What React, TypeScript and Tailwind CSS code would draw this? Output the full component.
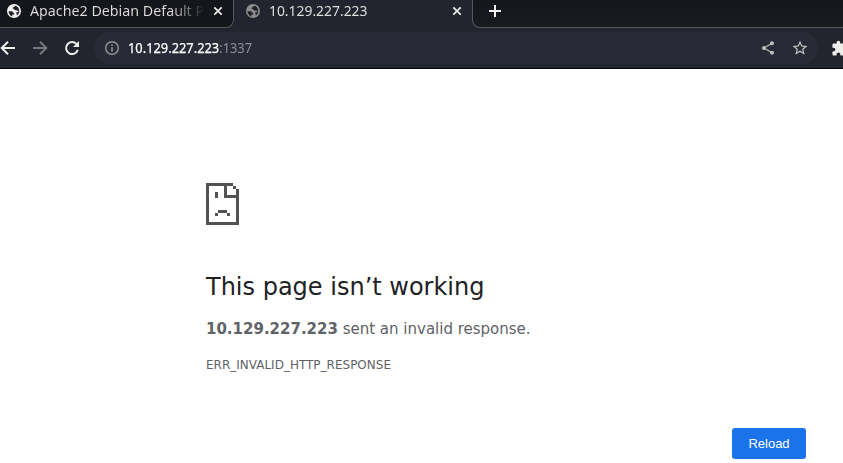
import { MdShare, MdStarOutline, MdExtension } from 'react-icons/md';

const SAD: [number, number, number, number][] = [
  [0, 0, 9, 1], [0, 1, 1, 12], [0, 13, 11, 1], [10, 2, 1, 11],
  [6, 1, 1, 4], [7, 4, 3, 1], [9, 1, 1, 1], [3, 3, 1, 2],
  [4, 9, 3, 1], [3, 10, 1, 1], [7, 10, 1, 1],
];

function Globe({ color }: { color: string }) {
  return (
    <svg className="shrink-0" width="14" height="14" viewBox="0 0 14 14">
      <circle cx="7" cy="7" r="7" fill={color} />
      <path d="M1.6 7.3 L4.6 7.3 C6 7.5 5.8 9 7.2 9 L7.2 10.4 L5.3 10.6 L5.3 12.4 C3.2 12 1.6 9.8 1.6 7.3 Z M8.3 1.7 C7.8 3.2 5.7 2.8 5.6 4.1 C5.5 5 7.1 4.7 7.4 5.6 C7.8 6.8 9.3 6.9 12.3 7.1 C12.2 9 11.4 10.6 10 11.5 L9.5 9.8 L9.1 8.4 L10.9 7.9 L12.3 6.2 C12 4 10.3 2.1 8.3 1.7 Z" fill="#202129" />
    </svg>
  );
}

function Cross() {
  return (
    <svg className="ml-[6px] shrink-0 text-[#eeeeea]" width="14" height="14" viewBox="0 0 14 14" fill="none" stroke="currentColor" strokeWidth="1.7">
      <path d="M3.3 3.3 L10.7 10.7 M10.7 3.3 L3.3 10.7" />
    </svg>
  );
}

function Arrow({ className }: { className: string }) {
  return (
    <svg className={`shrink-0 ${className}`} width="16" height="16" viewBox="0 0 16 16" fill="none" stroke="currentColor" strokeWidth="2">
      <path d="M15 8 H2.5 M8 1.7 L1.7 8 L8 14.3" />
    </svg>
  );
}

export default function App() {
  return (
    <div className="flex h-[463px] w-[843px] flex-col overflow-hidden bg-white font-['Noto_Sans',sans-serif]">
      <header className="h-[69px] shrink-0 border-b border-[#08090d] bg-[#22242e]">
        <div className="flex h-7">
          <div className="flex h-7 w-[234px] items-start rounded-br-lg border-r border-b border-[#56575b] bg-[#15161b] pl-[7px]">
            <div className="flex h-[22px] items-center">
              <Globe color="#f1f1ef" />
              <span className="ml-[9px] w-[175px] pb-[2px]">
                <span className="block w-[184px] origin-left scale-x-[.95] bg-linear-to-r from-[#dededb] from-80% to-transparent bg-clip-text text-[15px] whitespace-nowrap text-transparent">Apache2 Debian Default P</span>
              </span>
              <Cross />
            </div>
          </div>
          <div className="flex h-[22px] w-[238px] items-center pl-3">
            <Globe color="#8c8c8c" />
            <span className="ml-[9px] w-[175px] pb-[2px] text-[15px] text-[#dededb]"><span className="inline-block origin-left scale-x-[.925]">10.129.227.223</span></span>
            <Cross />
          </div>
          <div className="flex h-7 flex-1 items-start rounded-bl-lg border-b border-l border-[#56575b] bg-linear-to-b from-[#15161b] to-[#1a1b20] pl-[16px] text-[#f1f1ef]">
            <svg className="mt-[5px]" width="12" height="12" viewBox="0 0 12 12" fill="none" stroke="currentColor" strokeWidth="2">
              <path d="M6 0 V12 M0 6 H12" />
            </svg>
          </div>
        </div>
        <div className="flex h-10 items-center">
          <div className="flex items-center text-[#eeeeea]">
            <Arrow className="" />
            <Arrow className="ml-4 rotate-180 text-[#77787c]" />
            <svg className="ml-4 shrink-0" width="16" height="16" viewBox="0 0 16 16" fill="none" stroke="currentColor" strokeWidth="2">
              <path d="M13.8 9.8 A6 6 0 1 1 12.6 4.1" />
              <path d="M15 1 V7 H9 Z" fill="currentColor" stroke="none" />
            </svg>
          </div>
          <div className="ml-[14px] flex h-8 w-[724px] shrink-0 items-center rounded-full bg-[#282a35] pl-[11px]">
            <svg className="shrink-0 text-[#94959b]" width="14" height="14" viewBox="0 0 14 14" fill="none" stroke="currentColor">
              <circle cx="7" cy="7" r="6.3" strokeWidth="1.4" />
              <path d="M7 6.2 V10.5 M7 3.5 V5" strokeWidth="1.6" />
            </svg>
            <span className="ml-[9px] inline-block origin-left scale-x-[.918] pb-px text-[14px] text-[#8c8e96]"><span className="text-white [-webkit-text-stroke:0.25px_white]">10.129.227.223</span>:1337</span>
            <MdShare className="ml-auto text-[#c0c0c0]" size={16} />
            <MdStarOutline className="mr-[9px] ml-[15px] text-[#c0c0c0]" size={18} />
          </div>
          <MdExtension className="ml-[13px] shrink-0 text-[#eeeeea]" size={17} />
        </div>
      </header>
      <main className="flex flex-1 flex-col pl-[206px] font-['DejaVu_Sans',sans-serif] text-[#5f6368]">
        <svg className="mt-[114px] shrink-0" width="33" height="42" viewBox="0 0 11 14" shapeRendering="crispEdges" fill="#535353">
          {SAD.map(([x, y, w, h], i) => <rect key={i} x={x} y={y} width={w} height={h} />)}
        </svg>
        <h1 className="mt-[47px] text-[24px] leading-[30px] text-[#202124]">This page isn’t working</h1>
        <p className="mt-[15px] text-[15px] leading-6"><b>10.129.227.223</b> sent an invalid response.</p>
        <p className="mt-[15px] text-[12px] leading-[18px]">ERR_INVALID_HTTP_RESPONSE</p>
        <button className="mt-[54px] mr-[37px] h-[31px] w-[74px] shrink-0 self-end rounded-[3px] bg-[#1a73e8] font-['Liberation_Sans',sans-serif] text-[13px] text-white">Reload</button>
      </main>
    </div>
  );
}
